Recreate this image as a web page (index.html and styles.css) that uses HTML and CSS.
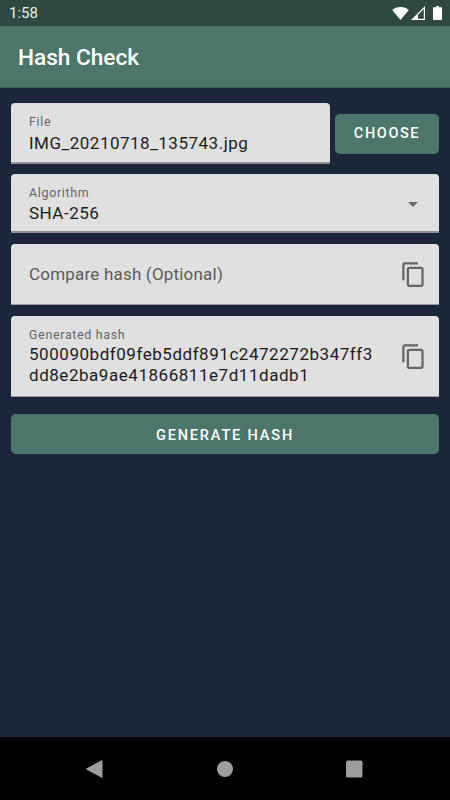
FILE: index.html
```html
<!DOCTYPE html>
<html lang="en">
<head>
<meta charset="utf-8">
<title>Hash Check</title>
<link rel="stylesheet" href="styles.css">
</head>
<body>
<div class="screen">
  <header class="status">
    <span class="time">1:58</span>
    <div class="status-icons">
      <svg class="ic-wifi" viewBox="0 0 18 14"><path d="M9 14 0 3.2C2.4 1.2 5.5 0 9 0s6.600 1.200 9 3.200z"/></svg>
      <svg class="ic-signal" viewBox="0 0 14 14"><path d="M14 0v14H0zM12.800 3 7 8.800v4h5.800z" fill-rule="evenodd"/></svg>
      <svg class="ic-battery" viewBox="0 0 9 14"><path d="M3 0h3v1.200h2c.6 0 1 .4 1 1V13c0 .6-.4 1-1 1H1c-.6 0-1-.4-1-1V2.200c0-.6.400-1 1-1h2z"/></svg>
    </div>
  </header>
  <div class="appbar"><h1 class="title">Hash Check</h1></div>
  <main class="content">
    <div class="file-row">
      <div class="field field-file">
        <div class="label">File</div>
        <div class="value">IMG_20210718_135743.jpg</div>
      </div>
      <button class="btn btn-choose">CHOOSE</button>
    </div>
    <div class="field field-algo">
      <div class="grow">
        <div class="label">Algorithm</div>
        <div class="value">SHA-256</div>
      </div>
      <span class="caret"></span>
    </div>
    <div class="field field-compare">
      <div class="grow placeholder">Compare hash (Optional)</div>
      <svg class="copy" viewBox="0 0 24 24"><path d="M16 1H4c-1.100 0-2 .9-2 2v14h2V3h12V1zm3 4H8c-1.100 0-2 .9-2 2v14c0 1.100.9 2 2 2h11c1.100 0 2-.9 2-2V7c0-1.100-.9-2-2-2zm0 16H8V7h11v14z"/></svg>
    </div>
    <div class="field field-hash">
      <div class="grow">
        <div class="label">Generated hash</div>
        <div class="value hash">500090bdf09feb5ddf891c2472272b347ff3<br>dd8e2ba9ae41866811e7d11dadb1</div>
      </div>
      <svg class="copy" viewBox="0 0 24 24"><path d="M16 1H4c-1.100 0-2 .9-2 2v14h2V3h12V1zm3 4H8c-1.100 0-2 .9-2 2v14c0 1.100.9 2 2 2h11c1.100 0 2-.9 2-2V7c0-1.100-.9-2-2-2zm0 16H8V7h11v14z"/></svg>
    </div>
    <button class="btn btn-generate">GENERATE HASH</button>
  </main>
  <nav class="navbar">
    <svg class="nav-ic" viewBox="0 0 18 20"><path d="M16.500 1.700v16.600c0 .5-.4.7-.8.5L.4 10.500c-.4-.2-.4-.7 0-1L15.700 1.200c.4-.2.8 0 .8.500z"/></svg>
    <svg class="nav-ic" viewBox="0 0 18 20"><circle cx="9" cy="10" r="8"/></svg>
    <svg class="nav-ic" viewBox="0 0 18 20"><rect x="1" y="1.500" width="16.500" height="17" rx="1.500"/></svg>
  </nav>
</div>
</body>
</html>
```
FILE: styles.css
```css
* { box-sizing: border-box; }
html, body { margin: 0; padding: 0; }
body { font-family: Roboto, sans-serif; background: #1b263b; }
.screen { width: 450px; height: 800px; display: flex; flex-direction: column; background: #1b263b; overflow: hidden; }
.status { height: 26px; flex: none; background: #2f4842; display: flex; align-items: center; justify-content: space-between; padding: 0 8px 0 9px; color: #fff; }
.time { font-size: 15px; color: #e8eeec; }
.status-icons { display: flex; align-items: center; gap: 2px; }
.status-icons svg { fill: #fff; display: block; }
.ic-wifi { width: 17px; height: 13px; }
.ic-signal { width: 14px; height: 14px; }
.ic-battery { width: 9px; height: 14px; margin-left: 6px; }
.appbar { height: 62px; flex: none; background: #4d766a; display: flex; align-items: center; padding: 2px 18px 0; border-bottom: 1px solid #3c5d56; }
.title { margin: 0; font-size: 22.600px; font-weight: 500; color: #fff; }
.content { flex: 1; padding: 15px 11px 0; display: flex; flex-direction: column; }
.file-row { display: flex; align-items: center; gap: 5px; margin-bottom: 10px; }
.field { background: #e0e0e0; border-radius: 4px 4px 0 0; border-bottom: 2px solid #8f8f8f; display: flex; align-items: center; padding: 0 15px 0 18px; color: #1f1f1f; }
.field-file { width: 319px; height: 61px; flex: none; display: block; padding-top: 11px; }
.field-file .label { margin-bottom: 3px; }
.field-algo { height: 59px; margin-bottom: 11px; padding-top: 4px; }
.field-algo .label { margin-bottom: 2px; }
.field-compare { height: 61px; margin-bottom: 11px; border-bottom-width: 1px; border-bottom-color: #9a9a9a; }
.field-hash { height: 81px; margin-bottom: 17px; border-bottom-width: 1px; border-bottom-color: #9a9a9a; }
.field-hash .label { margin-bottom: 2px; }
.grow { flex: 1; min-width: 0; }
.label { font-size: 12.400px; line-height: 15px; color: #666; letter-spacing: .7px; }
.value { font-size: 17px; line-height: 22px; letter-spacing: .5px; color: #1c1c1c; }
.hash { line-height: 21px; letter-spacing: .54px; white-space: nowrap; }
.placeholder { font-size: 17px; letter-spacing: .2px; color: #5b5b5b; }
.caret { width: 0; height: 0; border-left: 5px solid transparent; border-right: 5px solid transparent; border-top: 5px solid #6b6b6b; margin: 0 6px 0 0; }
.copy { width: 27px; height: 27px; flex: none; fill: #666; margin-right: -3px; }
.btn { border: none; background: #4d766a; color: #fff; font-family: Roboto, sans-serif; font-weight: 500; border-radius: 5px; letter-spacing: 1.600px; font-size: 14.500px; padding: 0 0 1px; }
.btn-choose { width: 104px; height: 40px; }
.btn-generate { height: 40px; width: 100%; letter-spacing: 1.850px; padding: 2px 0 0; }
.navbar { height: 63px; flex: none; background: #000; display: flex; align-items: center; justify-content: space-between; padding: 0 87px 0 86px; }
.nav-ic { width: 18px; height: 20px; fill: #9e9e9e; display: block; }
```
